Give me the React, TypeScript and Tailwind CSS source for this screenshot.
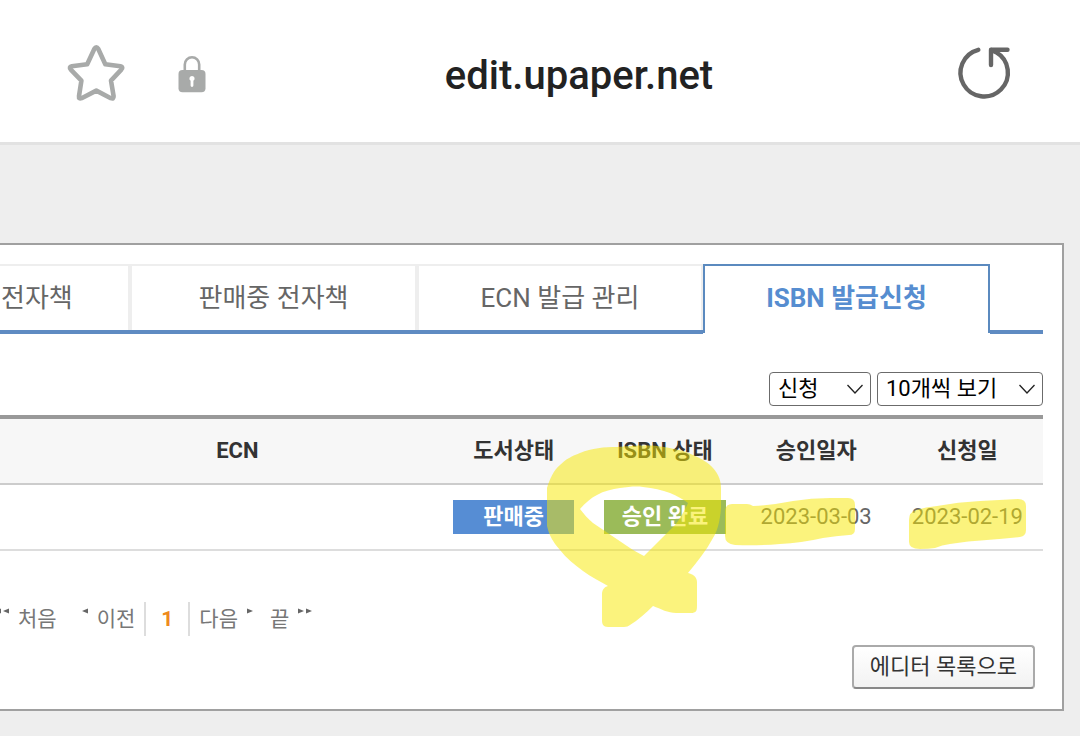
import React from "react";
import { clsx } from "clsx";

const tabs = [
    { label: "전자책", cut: true },
    { label: "판매중 전자책" },
    { label: "ECN 발급 관리" },
    { label: "ISBN 발급신청", active: true },
];

function StarIcon() {
    return (
        <svg className="h-16 w-16" viewBox="64 42 64 64" fill="none" stroke="#a8aaa9" strokeWidth="4.6" strokeLinejoin="round">
            <path d="M94.3 49 Q96.3 45.500 98.300 49 L105.300 64.200 L120.500 66.300 Q123.600 67 121.300 69.600 L111 80.600 L113.600 96.200 Q113.800 99.400 110.800 98.200 L96.300 90.600 L81.600 98.200 Q78.600 99.400 79 96.200 L81.400 80.600 L70.800 69.600 Q68.600 67 71.800 66.300 L87.200 64.200 Z" />
        </svg>
    );
}

function LockIcon() {
    return (
        <svg className="h-10 w-8" viewBox="176 53 32 40" fill="none" role="img" aria-label="보안 연결">
            <path d="M184.800 70 V63.500 a7.200 7.200 0 0 1 14.400 0 V70" stroke="#a8aaa9" strokeWidth="2.600" />
            <rect x="178.500" y="69" width="27" height="22.300" rx="4" fill="#a8aaa9" />
            <path d="M192 75 a2.600 2.600 0 0 1 1.400 4.800 V84.500 a1.400 1.400 0 0 1 -2.800 0 V79.800 A2.600 2.600 0 0 1 192 75 Z" fill="#fff" />
        </svg>
    );
}

function ReloadIcon() {
    return (
        <svg className="h-16 w-16" viewBox="952 42 64 64" fill="none" stroke="#666" strokeWidth="4.4" strokeLinecap="round" strokeLinejoin="round">
            <path d="M978.300 49.800 A23.700 23.700 0 1 0 996 52.200 L991.500 50" />
            <path d="M991 65 V49.700 H1007.500" />
        </svg>
    );
}

function Arrow({ right, double }: { right?: boolean; double?: boolean }) {
    return (
        <svg
            className={clsx("mt-1 h-2 self-start fill-[#666]", double ? "w-4" : "w-2", right && "rotate-180")}
            viewBox={double ? "0 0 16 8" : "0 0 8 8"}
        >
            <path d="M1 4 L7 1.500 V6.500 Z" />
            {double && <path d="M9 4 L15 1.500 V6.500 Z" />}
        </svg>
    );
}

function Select({ label, options, className }: { label: string; options: string[]; className: string }) {
    return (
        <div className={clsx("relative h-[34px]", className)}>
            <select aria-label={label} className="h-full w-full appearance-none rounded border border-[#6b6b6b] bg-white pl-2 text-[22px] leading-7 text-black">
                {options.map((o) => (
                    <option key={o}>{o}</option>
                ))}
            </select>
            <svg className="pointer-events-none absolute right-2 top-3 h-3 w-4" viewBox="0 0 16 12" fill="none" stroke="#222" strokeWidth="1.300">
                <path d="M0.500 1 L8 9 L15.500 1" />
            </svg>
        </div>
    );
}

// Yellow marker strokes drawn over the table
function Highlights() {
    return (
        <svg className="pointer-events-none absolute left-0 top-0 w-full overflow-visible" viewBox="0 415 1043 215" fill="#f7e700" fillOpacity="0.51" aria-hidden="true">
            <path
                fillRule="evenodd"
                d="M547 488 C550 478 554 470 560 465 C566 459 572 456 580 453 C592 448 604 447 617 447 C630 446 644 445 657 446 C671 448 683 450 693 455 C702 459 709 463 713 468 C719 475 721 481 721 488 V508 C720 520 718 530 713 538 C706 551 697 562 688 573 C693 574 697 577 697 582 V606 C697 611 696 613 691 613 H676 C668 613 661 609 653 606 C646 613 638 620 630 625 Q628 627 624 627 H608 C603 627 602 624 602 620 V594 C602 590 604 587 608 586 C600 581 591 577 583 571 C574 564 566 558 560 550 C553 542 549 535 547 526 Z
                   M580 509 C585 503 591 498 597 495 C604 491 612 489 620 488 C628 487 636 486 643 487 C653 488 662 490 670 493 C677 496 683 499 688 503 C686 508 683 513 680 518 C677 523 674 526 670 530 L644 556 C639 553 634 551 630 548 L593 523 C588 519 584 514 580 509 Z"
            />
            <path d="M725 512 Q725 504 732 504 H747 Q750 504 753 506 Q773 505 793 501 Q811 498 830 498 H848 Q855 498 855 505 V529 Q855 535 849 535 Q836 536 823 538 Q801 543 780 544 Q757 546 735 545 Q725 544 725 536 Z" />
            <path d="M909 520 Q909 512 916 510 Q926 507 937 506 Q958 502 980 501 L1018 499 Q1026 499 1026 506 V530 Q1026 536 1020 537 Q1003 539 987 540 Q968 541 950 544 Q942 545 935 548 Q929 549 920 549 Q909 549 909 542 Z" />
        </svg>
    );
}

export default function App() {
    return (
        <div className="min-h-screen overflow-hidden bg-[#eee] pb-6 font-['Roboto','Noto_Sans_CJK_KR',sans-serif] text-[22px] leading-8 text-[#666]">
            {/* Browser bar */}
            <header className="flex h-[145px] items-center gap-12 border-b-[3px] border-[#e2e2e2] bg-white px-16 pt-[6px]">
                <button type="button" aria-label="즐겨찾기">
                    <StarIcon />
                </button>
                <LockIcon />
                <h1 className="flex-1 pr-[2px] pt-1 text-center text-[40px] font-medium leading-12 text-[#222]">edit.upaper.net</h1>
                <button type="button" aria-label="새로고침">
                    <ReloadIcon />
                </button>
            </header>

            <main className="mr-4 mt-[98px] border-y-2 border-r-2 border-[#a0a0a0] bg-white pb-5 pr-[19px] pt-[19px]">
                {/* Tabs */}
                <nav className="grid h-[70px] grid-cols-[130fr_287fr_286fr_287fr_53fr] text-[26px]">
                    {tabs.map((tab) => (
                        <a
                            key={tab.label}
                            href="#"
                            className={clsx("flex whitespace-nowrap", tab.active ? "pb-px" : "border-b-4 border-[#5f8bc2]")}
                        >
                            <span
                                className={clsx(
                                    "flex flex-1 items-center border-x-2 border-t-2",
                                    tab.active ? "border-[#5b8abf] pb-[3px] font-bold text-[#568dd0]" : "border-[#eee]",
                                    tab.cut ? "border-l-0 pl-px" : "justify-center"
                                )}
                            >
                                {tab.label}
                            </span>
                        </a>
                    ))}
                    <div className="border-b-4 border-[#5f8bc2]" />
                </nav>

                {/* Filters */}
                <div className="mt-[38px] flex justify-end gap-[6px]">
                    <Select label="정렬" options={["신청", "승인"]} className="w-[102px]" />
                    <Select label="보기 개수" options={["10개씩 보기", "20개씩 보기"]} className="w-[166px]" />
                </div>

                <div className="relative mt-[9px]">
                    <table className="w-full table-fixed border-separate border-spacing-0 border-t-4 border-[#999] text-center">
                        <colgroup>
                            <col className="w-[3.5%]" />
                            <col />
                            <col className="w-[14.5%]" />
                            <col className="w-[14.5%]" />
                            <col className="w-[14.5%]" />
                            <col className="w-[14.5%]" />
                        </colgroup>
                        <thead>
                            <tr className="h-[66px] bg-[#f7f7f7] text-[#333]">
                                <td className="border-b-2 border-[#ccc]" />
                                <th className="border-b-2 border-[#ccc] font-bold">ECN</th>
                                <th className="border-b-2 border-[#ccc] font-bold">도서상태</th>
                                <th className="border-b-2 border-[#ccc] font-bold">ISBN 상태</th>
                                <th className="border-b-2 border-[#ccc] font-bold">승인일자</th>
                                <th className="border-b-2 border-[#ccc] font-bold">신청일</th>
                            </tr>
                        </thead>
                        <tbody>
                            <tr className="h-[66px]">
                                <td className="border-b-2 border-[#ddd]" />
                                <td className="border-b-2 border-[#ddd]" />
                                <td className="border-b-2 border-[#ddd] px-[15px]">
                                    <span className="block bg-[#568dd4] font-bold leading-[34px] text-white">판매중</span>
                                </td>
                                <td className="border-b-2 border-[#ddd] px-[15px]">
                                    <span className="block bg-[#9bbb59] font-bold leading-[34px] text-white">승인 완료</span>
                                </td>
                                <td className="border-b-2 border-[#ddd]">2023-03-03</td>
                                <td className="border-b-2 border-[#ddd]">2023-02-19</td>
                            </tr>
                        </tbody>
                    </table>
                    <Highlights />
                </div>

                {/* Pagination */}
                <nav className="mt-[51px] flex h-[34px] items-center text-[21px] text-[#777]">
                    <a href="#" className="-ml-[6px] flex items-center gap-2">
                        <Arrow double />
                        처음
                    </a>
                    <a href="#" className="ml-6 flex items-center gap-2">
                        <Arrow />
                        이전
                    </a>
                    <strong className="mx-[9px] border-x-2 border-[#ddd] px-[15px] leading-[34px] text-[#ee8a1d]">1</strong>
                    <a href="#" className="flex items-center gap-2">
                        다음
                        <Arrow right />
                    </a>
                    <a href="#" className="ml-4 flex items-center gap-2">
                        끝
                        <Arrow right double />
                    </a>
                </nav>

                <div className="mt-[9px] flex justify-end pr-2">
                    <button type="button" className="h-11 rounded border-2 border-[#aaa] border-b-[#888] bg-linear-to-b from-white to-[#f2f2f2] px-4 text-[#333]">
                        에디터 목록으로
                    </button>
                </div>
            </main>
        </div>
    );
}
